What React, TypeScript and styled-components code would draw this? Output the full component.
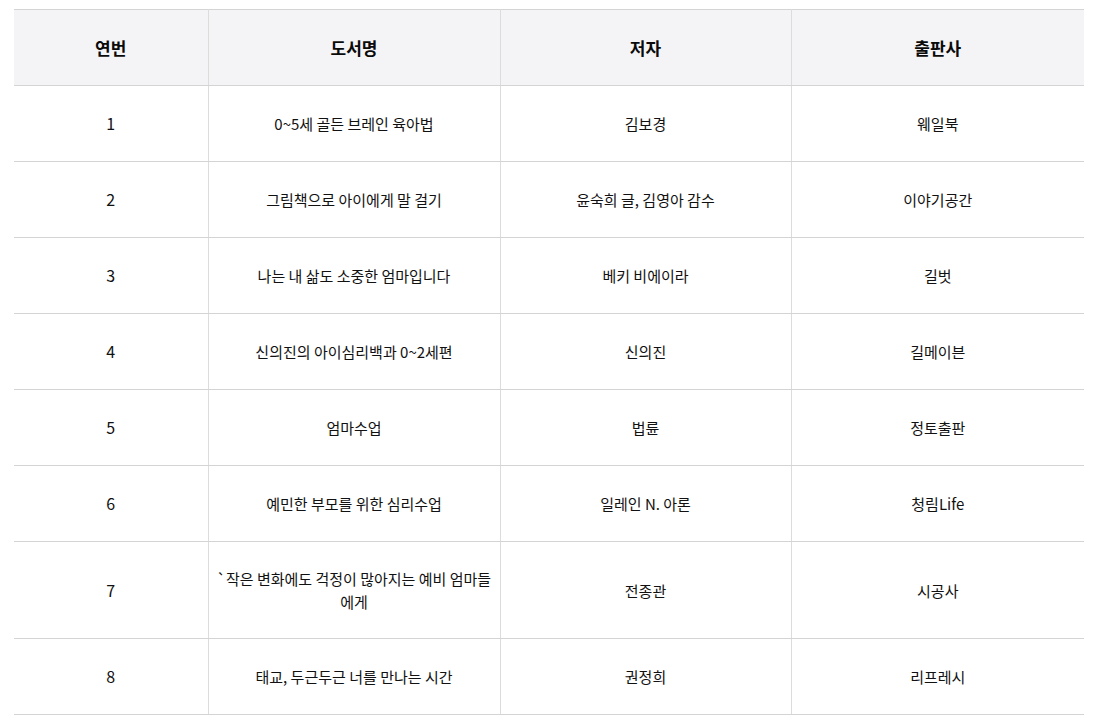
import styled, { createGlobalStyle } from "styled-components"

const GlobalStyle = createGlobalStyle`
  body {
    margin: 0;
    background: #ffffff;
    font-family: "Noto Sans CJK KR", "Noto Sans", sans-serif;
    color: #111111;
  }
`

const Page = styled.div`
  padding: 9px 20px 0 14px;
`

const Table = styled.table`
  width: 1070px;
  border-collapse: collapse;
  table-layout: fixed;
  border-top: 1px solid #d4d4d4;
`

const HeadCell = styled.th<{ $width: number }>`
  box-sizing: border-box;
  width: ${p => p.$width}px;
  height: 76px;
  padding: 0 5px;
  background: #f4f4f6;
  font-size: 17px;
  font-weight: 700;
  color: #0a0a0a;
  border-bottom: 1px solid #d4d4d4;
  & + & {
    border-left: 1px solid #dcdcdc;
  }
`

const Row = styled.tr``

const Cell = styled.td<{ $num?: boolean }>`
  box-sizing: border-box;
  height: 76px;
  padding: 25px 6px;
  text-align: center;
  vertical-align: middle;
  font-size: ${p => (p.$num ? 16 : 15)}px;
  line-height: 23px;
  border-bottom: 1px solid #d4d4d4;
  & + & {
    border-left: 1px solid #dcdcdc;
  }
`

const columns = [
  { label: "연번", width: 194 },
  { label: "도서명", width: 292 },
  { label: "저자", width: 291 },
  { label: "출판사", width: 293 },
]

const books = [
  { title: "0~5세 골든 브레인 육아법", author: "김보경", publisher: "웨일북" },
  { title: "그림책으로 아이에게 말 걸기", author: "윤숙희 글, 김영아 감수", publisher: "이야기공간" },
  { title: "나는 내 삶도 소중한 엄마입니다", author: "베키 비에이라", publisher: "길벗" },
  { title: "신의진의 아이심리백과 0~2세편", author: "신의진", publisher: "길메이븐" },
  { title: "엄마수업", author: "법륜", publisher: "정토출판" },
  { title: "예민한 부모를 위한 심리수업", author: "일레인 N. 아론", publisher: "청림Life" },
  { title: "`작은 변화에도 걱정이 많아지는 예비 엄마들에게", author: "전종관", publisher: "시공사" },
  { title: "태교, 두근두근 너를 만나는 시간", author: "권정희", publisher: "리프레시" },
]

export default function App() {
  return (
    <Page>
      <GlobalStyle />
      <Table>
        <thead>
          <tr>
            {columns.map(c => (
              <HeadCell key={c.label} $width={c.width}>
                {c.label}
              </HeadCell>
            ))}
          </tr>
        </thead>
        <tbody>
          {books.map((b, i) => (
            <Row key={b.title}>
              <Cell $num>{i + 1}</Cell>
              <Cell>{b.title}</Cell>
              <Cell>{b.author}</Cell>
              <Cell>{b.publisher}</Cell>
            </Row>
          ))}
        </tbody>
      </Table>
    </Page>
  )
}
